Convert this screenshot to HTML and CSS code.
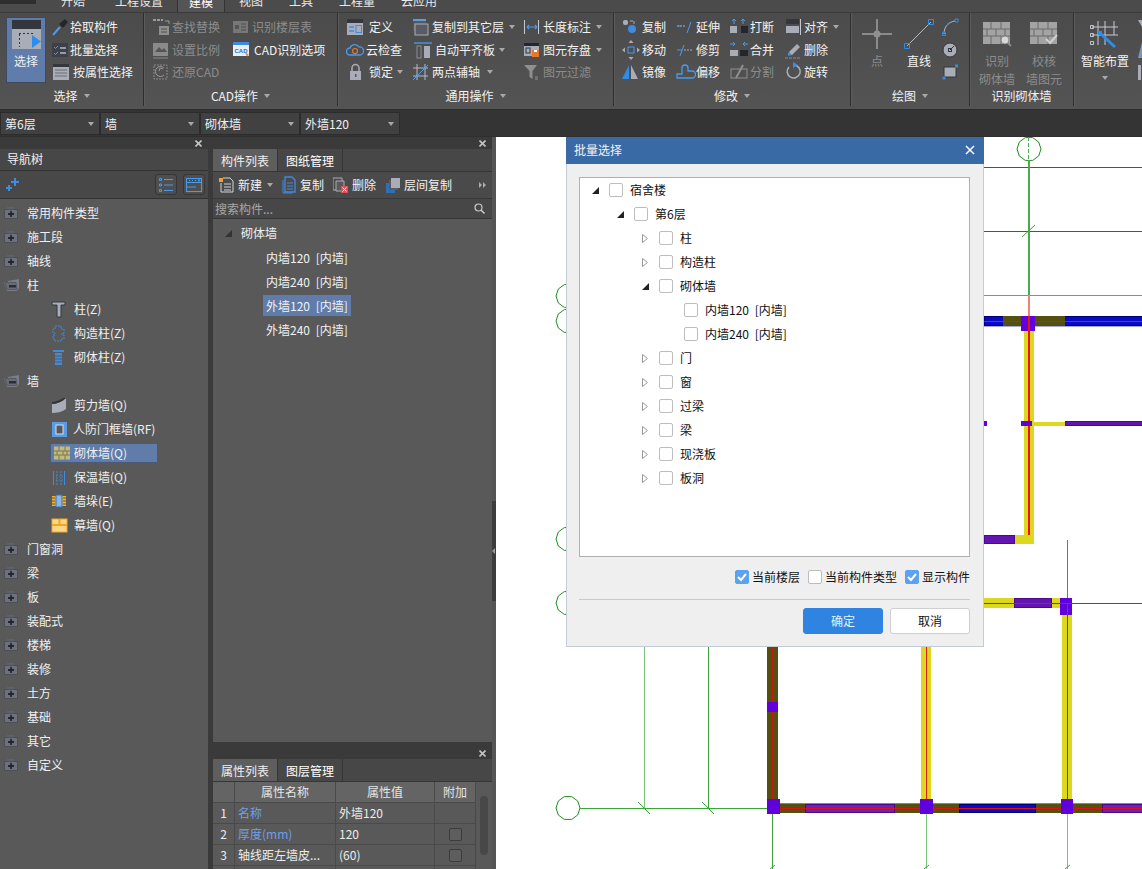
FILE: index.html
```html
<!DOCTYPE html>
<html lang="zh">
<head>
<meta charset="utf-8">
<title>批量选择</title>
<link rel="stylesheet" href="styles.css">
</head>
<body>
<svg class="sprite" aria-hidden="true">
  <symbol id="fold-closed" viewBox="0 0 14 12"><path d="M3 0h7l1 2H2z" fill="#5f626a"/><rect x=".5" y="2.500" width="13" height="9" fill="#6e7179" stroke="#4b4e56"/><path d="M7 4v6M4 7h6" stroke="#23262c" stroke-width="1.800"/></symbol>
  <symbol id="fold-open" viewBox="0 0 16 12"><path d="M4 2l11-2v9l-2 3H3L0 3h4z" fill="#7a7d85"/><path d="M1 3.500h11l1 7H3z" fill="#6a6d75" stroke="#4b4e56" stroke-width=".7"/><path d="M5 6h7v2.500H5z" fill="#2a2d33"/></symbol>
  <symbol id="tri-open" viewBox="0 0 7 7"><path d="M7 0v7H0z" fill="#222"/></symbol>
  <symbol id="tri-open-g" viewBox="0 0 7 7"><path d="M7 0v7H0z" fill="#333"/></symbol>
  <symbol id="tri-closed" viewBox="0 0 6 9"><path d="M.5.5l5 4-5 4z" fill="#fff" stroke="#999"/></symbol>
  <symbol id="tick" viewBox="0 0 14 14"><path d="M3 7l3 3 5-6" fill="none" stroke="#fff" stroke-width="2"/></symbol>
  <symbol id="close" viewBox="0 0 7 7"><path d="M.5.5l6 6M6.500.5l-6 6" stroke="#c4c4c4" stroke-width="1.600"/></symbol>
</svg>

<nav class="tabbar">
  <div class="titlepiece"></div>
  <span class="tab tab-first">开始</span>
  <span class="tab tab-second">工程设置</span>
  <span class="tab active">建模</span>
  <span class="tab">视图</span>
  <span class="tab">工具</span>
  <span class="tab">工程量</span>
  <span class="tab">云应用</span>
</nav>

<header class="ribbon">
  <section class="rgroup g-select">
    <div class="rbody">
      <div class="bigsel">
        <svg width="29" height="29" viewBox="0 0 29 29"><rect width="29" height="29" fill="#a9adb8"/><rect width="29" height="9" fill="#33363d"/><path d="M7 13.500h15M7.500 14v13" stroke="#33363d" stroke-dasharray="2 2" fill="none"/><path d="M20 15l9 6.500-9 6.500z" fill="#2d8de8"/></svg>
        <span>选择</span>
      </div>
      <div class="col c-sel">
        <div class="tool"><svg width="18" height="20" viewBox="0 0 18 20"><path d="M1 18L8 10" stroke="#4b9aec" stroke-width="2"/><path d="M7 7l6-5 3 3-5 6z" fill="#23262c"/></svg>拾取构件</div>
        <div class="tool"><svg width="18" height="20" viewBox="0 0 18 20"><rect x="0" y="3" width="16" height="14" fill="#3b404b"/><path d="M2 7l1.500 1.500L6 6M2 13l1.500 1.500L6 12" stroke="#4b9aec" fill="none"/><path d="M8 8h6M8 13h6" stroke="#b6bac2" stroke-width="1.500"/></svg>批量选择</div>
        <div class="tool"><svg width="21" height="20" viewBox="0 0 21 20"><rect x="1" y="2" width="16" height="16" fill="#a9adb8"/><rect x="1" y="2" width="16" height="3" fill="#33363d"/><path d="M3 8h12M3 11h12M3 14h12" stroke="#6a6d75"/></svg>按属性选择</div>
      </div>
    </div>
    <div class="rtitle">选择<i class="caret"></i></div>
  </section>

  <section class="rgroup g-cad">
    <div class="rbody">
      <div class="col c-cad">
        <div class="tool off"><svg width="20" height="20" viewBox="0 0 20 20"><path d="M1 3h10" stroke="#9a9a9a" stroke-width="2" stroke-dasharray="3 1"/><rect x="7" y="9" width="10" height="9" fill="#8f8f8f"/><path d="M9 12h6M9 15h6" stroke="#4f4f4f"/><path d="M13 4h4v3" stroke="#9a9a9a" fill="none"/></svg>查找替换</div>
        <div class="tool off"><svg width="20" height="20" viewBox="0 0 20 20"><rect x="1" y="3" width="15" height="13" fill="#8a8a8a"/><path d="M3 12l4-5 3 3 2-2 3 4z" fill="#555"/><path d="M1 18h15" stroke="#8a8a8a"/></svg>设置比例</div>
        <div class="tool off"><svg width="20" height="20" viewBox="0 0 20 20"><rect x="2" y="3" width="13" height="14" fill="none" stroke="#8a8a8a" stroke-dasharray="2 1"/><path d="M12 6a5 5 0 1 0 0 7M7 9l1-3 3 1" fill="none" stroke="#9a9a9a"/></svg>还原CAD</div>
      </div>
      <div class="col">
        <div class="tool off"><svg width="20" height="20" viewBox="0 0 20 20"><rect x="1" y="4" width="15" height="12" fill="#777"/><rect x="3" y="8" width="4" height="4" fill="#555"/><path d="M9 7h5M9 10h5M9 13h5" stroke="#4f4f4f"/></svg>识别楼层表</div>
        <div class="tool"><svg width="22" height="20" viewBox="0 0 22 20"><rect x="1" y="2" width="16" height="14" fill="#e8eef6"/><rect x="1" y="2" width="16" height="3" fill="#3f8be0"/><text x="2.500" y="13" class="cadtxt">CAD</text><path d="M13 12l4 3-2 1 1 3z" fill="#e8772e"/></svg>CAD识别选项</div>
      </div>
    </div>
    <div class="rtitle">CAD操作<i class="caret"></i></div>
  </section>

  <section class="rgroup g-common">
    <div class="rbody">
      <div class="col c-w66">
        <div class="tool"><svg width="23" height="20" viewBox="0 0 23 20"><rect x="1" y="2" width="16" height="16" fill="#a9adb8"/><rect x="1" y="2" width="16" height="4" fill="#33363d"/><path d="M3 10h5M3 14h5" stroke="#3f8be0" stroke-width="1.500"/><rect x="10" y="8.500" width="5.500" height="7" fill="none" stroke="#3f8be0"/></svg>定义</div>
        <div class="tool"><svg width="20" height="20" viewBox="0 0 20 20"><path d="M4 15a3.500 3.500 0 0 1 0-7 5 5 0 0 1 9-1 4 4 0 0 1 1 8z" fill="none" stroke="#4b9aec" stroke-width="1.300"/><circle cx="9" cy="11" r="2.500" fill="none" stroke="#e8772e" stroke-width="1.200"/></svg>云检查</div>
        <div class="tool"><svg width="23" height="20" viewBox="0 0 23 20"><path d="M6 9V6a3.500 3.500 0 0 1 7 0v3" fill="none" stroke="#a9adb8" stroke-width="1.500"/><rect x="4" y="9" width="11" height="9" fill="#a9adb8"/><rect x="9" y="12" width="1.500" height="3" fill="#55585f"/></svg>锁定<i class="caret near"></i></div>
      </div>
      <div class="col c-w112">
        <div class="tool"><svg width="20" height="20" viewBox="0 0 20 20"><rect x="1" y="2" width="13" height="12" fill="#5b9be6"/><rect x="1" y="4" width="13" height="10" fill="#595959"/><rect x="3" y="7" width="13" height="11" fill="#595c63" stroke="#a9adb8"/></svg>复制到其它层<i class="caret"></i></div>
        <div class="tool"><svg width="23" height="20" viewBox="0 0 23 20"><path d="M2 3h18" stroke="#4c7fb8" stroke-width="2"/><rect x="5" y="6" width="4" height="12" fill="none" stroke="#8a8d94"/><rect x="12" y="6" width="6" height="12" fill="#a9adb8"/></svg>自动平齐板<i class="caret near"></i></div>
        <div class="tool"><svg width="20" height="20" viewBox="0 0 20 20"><path d="M5 2v16M13 2v16M1 6h15M1 14h15" stroke="#b6bac2"/><path d="M1 18L16 3" stroke="#4b9aec"/></svg>两点辅轴<i class="caret wide"></i></div>
      </div>
      <div class="col">
        <div class="tool"><svg width="19" height="20" viewBox="0 0 19 20"><path d="M.5 3v14M14.500 3v14" stroke="#c6c9cf"/><path d="M3 10h10M3 10l2-2M3 10l2 2M13 10l-2-2M13 10l-2 2" stroke="#4b9aec" fill="none" stroke-width="1.200"/></svg>长度标注<i class="caret"></i></div>
        <div class="tool"><svg width="19" height="20" viewBox="0 0 19 20"><rect x="0" y="3" width="15" height="13" fill="#a9adb8"/><rect y="3" width="15" height="3" fill="#23262c"/><rect x="2" y="8" width="4" height="5" fill="none" stroke="#33363d"/><rect x="8" y="10" width="7" height="7" fill="#e8772e"/><rect x="10" y="10" width="3" height="2" fill="#fff"/></svg>图元存盘<i class="caret"></i></div>
        <div class="tool off"><svg width="19" height="20" viewBox="0 0 19 20"><path d="M0 3h13L8.500 9v8l-3-2V9z" fill="#8f8f8f"/><path d="M11 15h3M11 17h3" stroke="#8f8f8f"/></svg>图元过滤</div>
      </div>
    </div>
    <div class="rtitle">通用操作<i class="caret"></i></div>
  </section>

  <section class="rgroup g-modify">
    <div class="rbody">
      <div class="col c-w54">
        <div class="tool"><svg width="20" height="20" viewBox="0 0 20 20"><rect x="1" y="3" width="5" height="5" rx="2" fill="#a9adb8"/><circle cx="10" cy="12" r="4" fill="#3f8be0"/><path d="M8 4h3M12 4v3" stroke="#a9adb8"/></svg>复制</div>
        <div class="tool"><svg width="20" height="20" viewBox="0 0 20 20"><rect x="6" y="7" width="6" height="6" fill="none" stroke="#4b9aec"/><path d="M9 0l2.500 3h-5zM9 20l2.500-3h-5zM0 10l3-2.500v5zM18 10l-3-2.500v5z" fill="#a9adb8"/></svg>移动</div>
        <div class="tool"><svg width="20" height="20" viewBox="0 0 20 20"><path d="M7 3v14H0z" fill="#2d8de8"/><path d="M9 3v14h7z" fill="#a9adb8"/></svg>镜像</div>
      </div>
      <div class="col c-w54">
        <div class="tool"><svg width="20" height="20" viewBox="0 0 20 20"><path d="M1 9h9" stroke="#a9adb8" stroke-dasharray="2 1"/><path d="M1 9h4M11 16L15 5" stroke="#4b9aec"/></svg>延伸</div>
        <div class="tool"><svg width="20" height="20" viewBox="0 0 20 20"><path d="M8 10h8" stroke="#a9adb8" stroke-dasharray="2 1"/><path d="M1 10h5M4 16L8 5" stroke="#4b9aec"/></svg>修剪</div>
        <div class="tool"><svg width="20" height="20" viewBox="0 0 20 20"><path d="M1 16v-4h5V6a3 3 0 0 1 6 0v3h4a2 2 0 0 1 0 7z" fill="none" stroke="#4b9aec" stroke-width="1.300"/></svg>偏移</div>
      </div>
      <div class="col c-w55">
        <div class="tool"><svg width="20" height="20" viewBox="0 0 20 20"><path d="M4 2v5M2 4l2-2 2 2" stroke="#4b9aec" fill="none"/><rect y="9" width="7" height="7" fill="#a9adb8"/><rect x="11" y="9" width="7" height="7" fill="#23262c"/><path d="M13 2v5M11 4l2-2 2 2" stroke="#4b9aec" fill="none"/></svg>打断</div>
        <div class="tool"><svg width="20" height="20" viewBox="0 0 20 20"><path d="M0 4h5M3 2l2 2-2 2M18 4h-5M15 2l-2 2 2 2" stroke="#4b9aec" fill="none"/><rect y="10" width="8" height="6" fill="#a9adb8"/><rect x="10" y="10" width="8" height="6" fill="#23262c"/></svg>合并</div>
        <div class="tool off"><svg width="20" height="20" viewBox="0 0 20 20"><rect x="1" y="7" width="16" height="9" fill="none" stroke="#8f8f8f"/><path d="M6 16L13 3" stroke="#8f8f8f" stroke-width="2"/></svg>分割</div>
      </div>
      <div class="col">
        <div class="tool"><svg width="19" height="20" viewBox="0 0 19 20"><rect x="1" y="2" width="13" height="5" fill="#33363d"/><rect x="1" y="9" width="13" height="7" fill="#a9adb8"/><path d="M15.500 2v16" stroke="#c6c9cf"/></svg>对齐<i class="caret"></i></div>
        <div class="tool"><svg width="19" height="20" viewBox="0 0 19 20"><path d="M4 12l8-8 3 3-8 8H3z" fill="#a9adb8"/><path d="M4 12l3 3-4 1z" fill="#3f8be0"/><path d="M0 18h15" stroke="#8a8d94" stroke-dasharray="3 1"/></svg>删除</div>
        <div class="tool"><svg width="19" height="20" viewBox="0 0 19 20"><path d="M4 5a6.500 6.500 0 1 0 5-2" fill="none" stroke="#a9adb8" stroke-width="1.600"/><path d="M8 0l5 3-5 3z" fill="#3f8be0"/></svg>旋转</div>
      </div>
    </div>
    <div class="rtitle">修改<i class="caret"></i></div>
  </section>

  <section class="rgroup g-draw">
    <div class="rbody">
      <div class="big w42 off">
        <svg width="30" height="30" viewBox="0 0 30 30"><path d="M15 0v30M0 15h30" stroke="#c9c9c9"/><circle cx="15" cy="15" r="3.500" fill="#8f8f8f"/></svg>
        <span>点</span>
      </div>
      <div class="big w42">
        <svg width="30" height="30" viewBox="0 0 30 30"><path d="M3 27L27 3" stroke="#b6bac2"/><path d="M.5 24.500h5v5h-5zM24.500.5h5v5h-5z" fill="none" stroke="#2d8de8"/></svg>
        <span>直线</span>
      </div>
      <div class="col c-small">
        <div class="tool"><svg width="18" height="20" viewBox="0 0 18 20"><path d="M2 17C2 10 6 5 13 4" fill="none" stroke="#b6bac2"/><path d="M.5 15.500h3v3h-3zM13 2h3v3h-3z" fill="none" stroke="#2d8de8"/><circle cx="6" cy="7" r="1" fill="#2d8de8"/></svg></div>
        <div class="tool"><svg width="18" height="20" viewBox="0 0 18 20"><circle cx="8" cy="10" r="7" fill="#a9adb8" stroke="#33363d"/><path d="M8 10l4-4" stroke="#33363d"/><rect x="6.500" y="8.500" width="3" height="3" fill="none" stroke="#33363d"/></svg></div>
        <div class="tool"><svg width="18" height="20" viewBox="0 0 18 20"><rect x="2" y="5" width="12" height="10" fill="#a9adb8" stroke="#33363d"/><path d="M.5 14.500h3v3h-3zM13 2.500h3v3h-3z" fill="#2d8de8"/></svg></div>
      </div>
    </div>
    <div class="rtitle">绘图<i class="caret"></i></div>
  </section>

  <section class="rgroup g-recog">
    <div class="rbody">
      <div class="big w46 off">
        <svg width="30" height="30" viewBox="0 0 30 30"><rect x="1" y="3" width="27" height="22" fill="#a3a3a3"/><path d="M1 10h27M1 17h27M9 3v7M19 3v7M5 10v7M14 10v7M23 10v7M9 17v8M19 17v8" stroke="#6b6b6b"/><circle cx="23" cy="21" r="4" fill="#d8d8d8" stroke="#8a8a8a"/><path d="M26 24l3 3" stroke="#8a8a8a" stroke-width="2"/></svg>
        <span>识别<br>砌体墙</span>
      </div>
      <div class="big w46 off m1">
        <svg width="30" height="30" viewBox="0 0 30 30"><rect x="1" y="3" width="27" height="22" fill="#a3a3a3"/><path d="M1 10h27M1 17h27M9 3v7M19 3v7M5 10v7M14 10v7M23 10v7M9 17v8M19 17v8" stroke="#6b6b6b"/><path d="M17 20l4 4 7-8" fill="none" stroke="#cfcfcf" stroke-width="2"/></svg>
        <span>校核<br>墙图元</span>
      </div>
    </div>
    <div class="rtitle">识别砌体墙</div>
  </section>

  <section class="rgroup g-smart">
    <div class="rbody">
      <div class="big w50">
        <svg width="30" height="30" viewBox="0 0 30 30"><path d="M8 2v24M15 2v24M24 2v14M2 8h26M2 16h26" stroke="#c6c9cf"/><path d="M10 14l15 14" stroke="#2d8de8" stroke-width="3"/><rect x="8" y="12" width="4" height="4" fill="#2d8de8"/><path d="M.5 6.500h3v3h-3zM.5 14.500h3v3h-3zM.5 22.500h3v3h-3z" fill="none" stroke="#c6c9cf"/></svg>
        <span>智能布置</span>
        <i class="caret under"></i>
      </div>
      <div class="col c-edge">
        <div class="tool"><svg width="10" height="20" viewBox="0 0 10 20"><path d="M0 3h10v7H4z" fill="#a9adb8"/></svg></div>
        <div class="tool"><svg width="10" height="20" viewBox="0 0 10 20"><path d="M4 2h6v16H0z" fill="#7f95b8"/></svg></div>
        <div class="tool"><svg width="10" height="20" viewBox="0 0 10 20"><path d="M0 3h3v15H0zM5 3h5v15H5z" fill="#a9adb8"/></svg></div>
      </div>
    </div>
  </section>
</header>

<div class="selbar">
  <div class="sel">第6层<i class="caret"></i></div>
  <div class="sel">墙<i class="caret"></i></div>
  <div class="sel">砌体墙<i class="caret"></i></div>
  <div class="sel">外墙120<i class="caret"></i></div>
</div>

<main class="main">
  <aside class="leftpane">
    <div class="strip"><svg class="x" width="7" height="7"><use href="#close"/></svg></div>
    <div class="navtitle">导航树</div>
    <div class="navtools">
      <svg width="14" height="14" viewBox="0 0 14 14"><path d="M8 0h2v3h3v2h-3v3H8V5H5V3h3zM2 7h2v2h2v2H4v2H2v-2H0V9h2z" fill="#3f8be0"/></svg>
      <div class="navbtns">
        <div class="navbtn"><svg width="14" height="14" viewBox="0 0 14 14"><path d="M.5.500h2v2h-2zM.5 6h2v2h-2zM.5 11.500h2v2h-2z" fill="none" stroke="#4b9aec"/><path d="M5 1.500h9M5 7h9M5 12.500h9" stroke="#4b9aec"/></svg></div>
        <div class="navbtn"><svg width="16" height="14" viewBox="0 0 16 14"><rect x=".5" y=".5" width="15" height="13" fill="none" stroke="#4b9aec"/><path d="M1 4.500h14M1 9h9M3 2.500h1M6 2.500h1M9 2.500h1M12 2h2l-1 1.500z" stroke="#4b9aec"/></svg></div>
      </div>
    </div>
    <ul class="navtree">
      <li class="nrow"><svg class="fi" width="14" height="12"><use href="#fold-closed"/></svg>常用构件类型</li>
      <li class="nrow"><svg class="fi" width="14" height="12"><use href="#fold-closed"/></svg>施工段</li>
      <li class="nrow"><svg class="fi" width="14" height="12"><use href="#fold-closed"/></svg>轴线</li>
      <li class="nrow"><svg class="fi" width="16" height="12"><use href="#fold-open"/></svg>柱</li>
      <li class="nrow child"><svg width="24" height="20" viewBox="0 0 24 20"><path d="M2 3h13v3h-4v12H7V6H2z" fill="#a9adb8" stroke="#33363d"/></svg>柱(Z)</li>
      <li class="nrow child"><svg width="24" height="20" viewBox="0 0 24 20"><path d="M5 3h6v3h3v4h-2v2h2v4h-3v2H5v-2H3v-4h2v-2H3V6h2z" fill="none" stroke="#3f8be0" stroke-dasharray="2 1"/></svg>构造柱(Z)</li>
      <li class="nrow child"><svg width="24" height="20" viewBox="0 0 24 20"><path d="M3 3h11v2H3zM5 6h7v12H5z" fill="#3f8be0"/><path d="M5 9h7M5 12h7M5 15h7" stroke="#595959"/></svg>砌体柱(Z)</li>
      <li class="nrow"><svg class="fi" width="16" height="12"><use href="#fold-open"/></svg>墙</li>
      <li class="nrow child"><svg width="24" height="20" viewBox="0 0 24 20"><path d="M2 9c4 0 10-2 14-6v11c-4 3-10 4-14 4z" fill="#a9adb8"/><path d="M2 9c4 0 10-2 14-6l-3 0C10 5 5 7 2 7z" fill="#33363d"/></svg>剪力墙(Q)</li>
      <li class="nrow child"><svg width="23" height="20" viewBox="0 0 23 20"><rect x="2" y="3" width="15" height="15" fill="#5b9be6"/><rect x="6" y="6" width="7" height="9" fill="#595959" stroke="#cfe0f6"/></svg>人防门框墙(RF)</li>
      <li class="nrow child"><span class="picked"><svg width="18" height="16" viewBox="0 0 18 16"><rect x="2" y="1.500" width="16" height="13" fill="#c2bb80"/><path d="M2 6h16M2 10h16M7 1.500V6M13 1.500V6M5 6v4M11 6v4M15 6v4M7 10v4.500M13 10v4.500" stroke="#7a7650"/></svg>砌体墙(Q)</span></li>
      <li class="nrow child"><svg width="24" height="20" viewBox="0 0 24 20"><path d="M3.500 4v14M14.500 4v14" stroke="#3f8be0"/><path d="M7 4v14M11 4v14" stroke="#3f8be0" stroke-dasharray="2 1"/><path d="M3 9h12M3 13h12" stroke="#3f8be0" stroke-dasharray="1 2"/></svg>保温墙(Q)</li>
      <li class="nrow child"><svg width="24" height="20" viewBox="0 0 24 20"><rect x="2" y="5" width="14" height="10" fill="#f0b429"/><path d="M2 7h3M2 10h3M2 13h3M13 7h3M13 10h3M13 13h3" stroke="#595959"/><rect x="6" y="4" width="6" height="12" fill="#8ab7ea" stroke="#3f6fb0"/></svg>墙垛(E)</li>
      <li class="nrow child"><svg width="24" height="20" viewBox="0 0 24 20"><rect x="2" y="4" width="15" height="13" fill="#fdd68a" stroke="#f0a820"/><path d="M2 10h15M9.500 4v6" stroke="#f0a820" stroke-width="2"/></svg>幕墙(Q)</li>
      <li class="nrow"><svg class="fi" width="14" height="12"><use href="#fold-closed"/></svg>门窗洞</li>
      <li class="nrow"><svg class="fi" width="14" height="12"><use href="#fold-closed"/></svg>梁</li>
      <li class="nrow"><svg class="fi" width="14" height="12"><use href="#fold-closed"/></svg>板</li>
      <li class="nrow"><svg class="fi" width="14" height="12"><use href="#fold-closed"/></svg>装配式</li>
      <li class="nrow"><svg class="fi" width="14" height="12"><use href="#fold-closed"/></svg>楼梯</li>
      <li class="nrow"><svg class="fi" width="14" height="12"><use href="#fold-closed"/></svg>装修</li>
      <li class="nrow"><svg class="fi" width="14" height="12"><use href="#fold-closed"/></svg>土方</li>
      <li class="nrow"><svg class="fi" width="14" height="12"><use href="#fold-closed"/></svg>基础</li>
      <li class="nrow"><svg class="fi" width="14" height="12"><use href="#fold-closed"/></svg>其它</li>
      <li class="nrow"><svg class="fi" width="14" height="12"><use href="#fold-closed"/></svg>自定义</li>
    </ul>
  </aside>

  <div class="midcol">
    <section class="panel listpanel">
      <div class="strip"><svg class="x" width="7" height="7"><use href="#close"/></svg></div>
      <div class="ptabs">
        <span class="ptab on">构件列表</span>
        <span class="ptab">图纸管理</span>
      </div>
      <div class="ltools">
        <span class="lt t-new"><svg width="19" height="20" viewBox="0 0 19 20"><rect x="0" y="3" width="4" height="4" fill="#f0a040"/><path d="M4 3h7l3 3v11H2V8" fill="none" stroke="#d0d3d8"/><path d="M5 9h7M5 12h7M5 15h7" stroke="#d0d3d8"/></svg>新建<i class="caret"></i></span>
        <span class="lt t-copy"><svg width="18" height="20" viewBox="0 0 18 20"><path d="M1 5v13h9" fill="none" stroke="#3f8be0"/><path d="M3 2h7l3 3v12H3z" fill="none" stroke="#3f8be0" stroke-width="1.300"/><path d="M5 8h6M5 11h6M5 14h6" stroke="#3f8be0"/></svg>复制</span>
        <span class="lt t-del"><svg width="19" height="20" viewBox="0 0 19 20"><path d="M0 3h9v12H0z" fill="none" stroke="#a9adb8"/><path d="M3 6h8v10H3z" fill="#595959" stroke="#a9adb8"/><rect x="8" y="11" width="7" height="7" fill="#d9505a"/><path d="M9.500 12.500l4 4M13.500 12.500l-4 4" stroke="#fff"/></svg>删除</span>
        <span class="lt t-floor"><svg width="18" height="20" viewBox="0 0 18 20"><path d="M0 8h9v10H0z" fill="#2f6fb8"/><rect x="3" y="5" width="9" height="10" fill="#595c63"/><rect x="5" y="3" width="9" height="10" fill="#a9adb8"/></svg>层间复制</span>
        <svg class="more" width="8" height="8" viewBox="0 0 8 8"><path d="M0 1l3 3-3 3zM4 1l3 3-3 3z" fill="#aaa"/></svg>
      </div>
      <div class="search">搜索构件...<svg width="11" height="11" viewBox="0 0 11 11"><circle cx="4.500" cy="4.500" r="3.500" fill="none" stroke="#c9c9c9" stroke-width="1.200"/><path d="M7 7l3.500 3.500" stroke="#c9c9c9" stroke-width="1.500"/></svg></div>
      <ul class="ltree">
        <li class="lrow root"><svg width="7" height="7"><use href="#tri-open-g"/></svg>砌体墙</li>
        <li class="lrow item"><span>内墙120 [内墙]</span></li>
        <li class="lrow item"><span>内墙240 [内墙]</span></li>
        <li class="lrow item"><span class="picked-text">外墙120 [内墙]</span></li>
        <li class="lrow item"><span>外墙240 [内墙]</span></li>
      </ul>
    </section>

    <section class="panel proppanel">
      <div class="strip"><svg class="x" width="7" height="7"><use href="#close"/></svg></div>
      <div class="ptabs">
        <span class="ptab on">属性列表</span>
        <span class="ptab">图层管理</span>
      </div>
      <div class="propbody">
        <div class="ptable">
          <div class="cell head"></div><div class="cell head ctr">属性名称</div><div class="cell head ctr">属性值</div><div class="cell head ctr">附加</div>
          <div class="cell ctr num">1</div><div class="cell link">名称</div><div class="cell">外墙120</div><div class="cell"></div>
          <div class="cell ctr num">2</div><div class="cell link">厚度(mm)</div><div class="cell">120</div><div class="cell ctr"><span class="pchk"></span></div>
          <div class="cell ctr num">3</div><div class="cell">轴线距左墙皮...</div><div class="cell">(60)</div><div class="cell ctr"><span class="pchk"></span></div>
          <div class="cell ctr num"></div><div class="cell"></div><div class="cell"></div><div class="cell"></div>
        </div>
        <div class="vscroll"><div class="thumb"></div></div>
      </div>
    </section>
  </div>

  <div class="splitter"><div class="handle"><i></i></div></div>

  <div class="canvas">
    <svg class="drawing" width="646" height="732" viewBox="496 137 646 732">
      <defs>
        <polygon id="axis" points="12,0 9.700,7 3.700,11.400 -3.700,11.400 -9.700,7 -12,0 -9.700,-7 -3.700,-11.400 3.700,-11.400 9.700,-7" fill="none" stroke="#1f8f1f"/>
      </defs>
      <rect x="496" y="137" width="646" height="732" fill="#fff"/>
      <use href="#axis" x="568" y="296"/><use href="#axis" x="568" y="321"/><use href="#axis" x="568" y="539"/><use href="#axis" x="568" y="603"/>
      <use href="#axis" x="568" y="808"/><use href="#axis" x="1029" y="149"/>
      <g shape-rendering="crispEdges">
        <path d="M984 167.500h158M984 231.500h158" stroke="#1a7a1a"/>
        <path d="M1028.500 160v135.500" stroke="#4cab4c" stroke-width="2"/>
        <path d="M1028.500 137v23" stroke="#4cab4c" stroke-dasharray="4 2"/>
        <path d="M984 295.500h158" stroke="#f06060"/>
        <path d="M1028.500 295v21" stroke="#f08080" stroke-width="2"/>
        <path d="M580 808.500h187" stroke="#3ba53b"/>
        <path d="M644.500 647v161" stroke="#7cc47c"/>
        <path d="M708.500 647v161" stroke="#3ba53b"/>
        <path d="M772.500 814v55" stroke="#3ba53b"/>
        <path d="M926.500 814v55M1067.500 814v55" stroke="#7cc47c"/>

        <rect x="984.500" y="316.500" width="158" height="9" fill="#0a0ac4" stroke="#00007c"/>
        <path d="M984 326.500h158" stroke="#a8a8dc"/>
        <rect x="1003" y="316" width="62" height="10" fill="#54500f"/>
        <path d="M984 321.500h158" stroke="#d81818"/>
        <rect x="1024" y="331" width="10" height="213" fill="#dcd820"/>
        <rect x="1021" y="316" width="14" height="15" fill="#6000dc"/>
        <path d="M1028.500 316v228" stroke="#f01010" stroke-width="2"/>
        <rect x="1034" y="422" width="31" height="4" fill="#dcd820"/>
        <rect x="1065.500" y="421.500" width="77" height="4" fill="#6414b0" stroke="#4a0a8c"/>
        <rect x="1021" y="421" width="11" height="5" fill="#6000dc"/>
        <rect x="984" y="421" width="3" height="5" fill="#6000dc"/>
        <rect x="984.500" y="535.500" width="30" height="8" fill="#6414b0" stroke="#4a0a8c"/>
        <rect x="1015" y="535" width="15" height="9" fill="#dcd820"/>

        <path d="M1067.500 540v63" stroke="#f04040"/>
        <path d="M984 598h30v10h-30zM1052 598h8v10h-8z" fill="#dcd820"/>
        <rect x="1014.500" y="598.500" width="37" height="9" fill="#6414b0" stroke="#4a0a8c"/>
        <rect x="1062" y="615" width="10" height="188" fill="#dcd820"/>
        <rect x="1060" y="598" width="12" height="17" fill="#6000dc"/>
        <path d="M984 603.500h158" stroke="#d81818"/>
        <path d="M1067.500 603v197" stroke="#f01010"/>

        <rect x="767" y="647" width="11" height="155" fill="#54500f"/>
        <path d="M772.500 647v155" stroke="#c81810" stroke-width="2"/>
        <rect x="767" y="702" width="11" height="10" fill="#6000dc"/>
        <rect x="921" y="647" width="10" height="155" fill="#dcd820"/>
        <path d="M926.500 647v155" stroke="#e02010"/>

        <rect x="778" y="803" width="364" height="10" fill="#54500f"/>
        <path d="M778 803.500h364" stroke="#8f8c5c"/>
        <rect x="805.500" y="804.500" width="89" height="8" fill="#6f20b8" stroke="#4a0a8c"/>
        <rect x="959.500" y="804.500" width="76" height="8" fill="#0a0ac4" stroke="#00007c"/>
        <rect x="1102.500" y="804.500" width="40" height="8" fill="#6f20b8" stroke="#4a0a8c"/>
        <path d="M778 808.500h364" stroke="#e01010"/>
        <rect x="767" y="799" width="13" height="15" fill="#6000dc"/>
        <rect x="920" y="799" width="13" height="15" fill="#6000dc"/>
        <rect x="1061" y="799" width="12" height="15" fill="#6000dc"/>
      </g>
      <path d="M1022 237l13-12M638 802l12 12M702 802l12 12M770 869l5-4M924 869l5-4M1065 869l5-4" stroke="#3ba53b"/>
    </svg>

    <div class="dialog">
      <div class="dtitle">批量选择<svg width="10" height="10" viewBox="0 0 10 10"><path d="M1 1l8 8M9 1l-8 8" stroke="#fff" stroke-width="1.500"/></svg></div>
      <div class="dbody">
        <ul class="dtree">
          <li class="drow l1"><svg class="da" width="7" height="7"><use href="#tri-open"/></svg><span class="chk"></span>宿舍楼</li>
          <li class="drow l2"><svg class="da" width="7" height="7"><use href="#tri-open"/></svg><span class="chk"></span>第6层</li>
          <li class="drow l3"><svg class="da" width="6" height="9"><use href="#tri-closed"/></svg><span class="chk"></span>柱</li>
          <li class="drow l3"><svg class="da" width="6" height="9"><use href="#tri-closed"/></svg><span class="chk"></span>构造柱</li>
          <li class="drow l3"><svg class="da" width="7" height="7"><use href="#tri-open"/></svg><span class="chk"></span>砌体墙</li>
          <li class="drow l4"><span class="chk"></span>内墙120 [内墙]</li>
          <li class="drow l4"><span class="chk"></span>内墙240 [内墙]</li>
          <li class="drow l3"><svg class="da" width="6" height="9"><use href="#tri-closed"/></svg><span class="chk"></span>门</li>
          <li class="drow l3"><svg class="da" width="6" height="9"><use href="#tri-closed"/></svg><span class="chk"></span>窗</li>
          <li class="drow l3"><svg class="da" width="6" height="9"><use href="#tri-closed"/></svg><span class="chk"></span>过梁</li>
          <li class="drow l3"><svg class="da" width="6" height="9"><use href="#tri-closed"/></svg><span class="chk"></span>梁</li>
          <li class="drow l3"><svg class="da" width="6" height="9"><use href="#tri-closed"/></svg><span class="chk"></span>现浇板</li>
          <li class="drow l3"><svg class="da" width="6" height="9"><use href="#tri-closed"/></svg><span class="chk"></span>板洞</li>
        </ul>
        <div class="dopts">
          <label class="opt"><span class="chk on"><svg width="14" height="14"><use href="#tick"/></svg></span>当前楼层</label>
          <label class="opt"><span class="chk"></span>当前构件类型</label>
          <label class="opt"><span class="chk on"><svg width="14" height="14"><use href="#tick"/></svg></span>显示构件</label>
        </div>
        <div class="ddiv"></div>
        <div class="dbtns">
          <button class="btn primary">确定</button>
          <button class="btn">取消</button>
        </div>
      </div>
    </div>
  </div>
</main>
</body>
</html>
```
FILE: styles.css
```css
* { box-sizing: border-box; }
html, body { margin: 0; padding: 0; }
body {
  width: 1142px;
  height: 869px;
  overflow: hidden;
  background: #333;
  color: #f2f2f2;
  font: 12px/20px "Noto Sans CJK SC", "Liberation Sans", sans-serif;
}
ul { list-style: none; margin: 0; padding: 0; }
i { font-style: normal; }
svg { display: block; flex: none; }
.sprite { display: none; }

/* top tabs */
.tabbar {
  display: flex;
  height: 12px;
  overflow: hidden;
  background: #4b4b4b;
  position: relative;
}
.titlepiece { width: 36px; height: 4px; background: #2e2e2e; flex: none; margin-right: 12px; }
.tab {
  flex: none;
  padding: 0 13px;
  height: 12px;
  line-height: 2px;
  color: #e8e8e8;
}
.tab-first { padding-right: 17px; margin-left: 0; }
.tab.active {
  background: #555;
  border-left: 1px solid #333;
  border-right: 1px solid #333;
  padding: 0 11px;
  margin: 0 1px;
  line-height: 3px;
  color: #fff;
}

/* ribbon */
.ribbon {
  display: flex;
  height: 98px;
  overflow: hidden;
  border-top: 1px solid #3a3a3a;
  border-bottom: 1px solid #2e2e2e;
  background: linear-gradient(#4b4b4b, #545454);
}
.rgroup {
  flex: none;
  height: 93px;
  border-right: 1px solid #2e2e2e;
  box-shadow: 1px 0 0 #5c5c5c;
}
.rbody { display: flex; height: 73px; padding-top: 3px; }
.rtitle {
  display: flex;
  align-items: center;
  justify-content: center;
  height: 20px;
  color: #f2f2f2;
}
.rtitle .caret { margin-left: 6px; }
.caret {
  display: inline-block;
  flex: none;
  width: 0;
  height: 0;
  border-left: 3.5px solid transparent;
  border-right: 3.5px solid transparent;
  border-top: 4px solid #a8a8a8;
  margin-left: 5px;
}
.caret.near { margin-left: 4px; }
.caret.wide { margin-left: 7px; }
.caret.under { margin: 6px 0 0; }

.g-select { width: 144px; }
.g-select .rbody { padding-left: 6px; }
.g-cad { width: 194px; }
.g-cad .rbody { padding-left: 8px; }
.g-common { width: 276px; }
.g-common .rbody { padding-left: 8px; }
.g-modify { width: 237px; }
.g-modify .rbody { padding-left: 8px; }
.g-draw { width: 119px; }
.g-draw .rbody { padding-left: 5px; }
.g-recog { width: 104px; }
.g-recog .rbody { padding-left: 4px; }
.g-smart { flex: 1; border-right: 0; box-shadow: none; }
.g-smart .rbody { padding-left: 6px; }

.col {
  display: grid;
  grid-template-rows: 22px 23px 22px;
  flex: none;
}
.c-sel { margin-left: 6px; }
.c-cad { width: 80px; }
.c-w66 { width: 66px; }
.c-w112 { width: 112px; }
.c-w54 { width: 54px; }
.c-w55 { width: 55px; }
.c-small { margin-left: 2px; }
.c-edge { margin-left: 8px; }
.tool {
  display: flex;
  align-items: center;
  white-space: nowrap;
  color: #f2f2f2;
}
.tool.off, .big.off { color: #8c8c8c; }
.cadtxt { font: bold 6px "Liberation Sans", sans-serif; fill: #2f6fb8; }

.bigsel {
  display: flex;
  flex-direction: column;
  align-items: center;
  flex: none;
  width: 40px;
  height: 66px;
  margin-top: 1px;
  padding-top: 2px;
  background: #5f7caa;
  border: 1px solid #3d4a60;
}
.bigsel span { margin-top: 2px; line-height: 20px; }

.big {
  display: flex;
  flex-direction: column;
  align-items: center;
  flex: none;
  padding-top: 3px;
  text-align: center;
  color: #f2f2f2;
}
.big span { display: block; margin-top: 3px; line-height: 18px; white-space: nowrap; }
.w42 { width: 42px; }
.w46 { width: 46px; }
.w50 { width: 50px; }
.m1 { margin-left: 1px; }

/* selectors */
.selbar {
  display: flex;
  height: 26px;
  padding-top: 2px;
  background: #343434;
}
.sel {
  display: flex;
  align-items: center;
  justify-content: space-between;
  width: 100px;
  height: 23px;
  padding: 0 5px 0 4px;
  background: #414141;
  border: 1px solid #2c2c2c;
  color: #f0f0f0;
}
.sel .caret { border-top-color: #a8a8a8; }

/* main */
.main {
  display: flex;
  height: 733px;
  border-top: 1px solid #2e2e2e;
  background: #3a3a3a;
}
.strip {
  display: flex;
  justify-content: flex-end;
  align-items: center;
  height: 12px;
  padding-right: 6px;
  background: #3a3a3a;
}
.leftpane {
  flex: none;
  width: 208px;
  background: #595959;
  margin-right: 5px;
}
.navtitle {
  height: 22px;
  padding-left: 7px;
  line-height: 20px;
  background: #474747;
  border-bottom: 1px solid #333;
}
.navtools {
  display: flex;
  align-items: center;
  justify-content: space-between;
  height: 28px;
  padding: 0 3px 0 6px;
  background: #484848;
  border-bottom: 1px solid #333;
}
.navbtns { display: flex; gap: 6px; }
.navbtn {
  display: flex;
  align-items: center;
  justify-content: center;
  width: 22px;
  height: 21px;
  background: #4f4f4f;
  border: 1px solid #363636;
  border-radius: 3px;
}
.navtree { padding-top: 2px; }
.nrow {
  display: flex;
  align-items: center;
  height: 24px;
  padding-left: 4px;
  white-space: nowrap;
  color: #f0f0f0;
}
.nrow .fi { margin-right: 9px; }
.nrow .fi[width="16"] { margin-right: 7px; }
.nrow.child { padding-left: 50px; }
.picked {
  display: flex;
  align-items: center;
  width: 108px;
  height: 20px;
  margin-left: 0;
  background: #5f7caa;
  box-shadow: inset 0 0 0 1px #4a5a78;
  gap: 4px;
  padding-left: 2px;
}

/* middle */
.midcol {
  display: flex;
  flex-direction: column;
  flex: none;
  width: 279px;
  gap: 5px;
}
.panel { background: #595959; }
.listpanel { flex: 1; }
.proppanel { height: 122px; overflow: hidden; }
.ptabs {
  display: flex;
  height: 23px;
  background: #474747;
  border-bottom: 1px solid #363636;
}
.ptab {
  width: 65px;
  text-align: center;
  line-height: 24px;
  border-right: 1px solid #363636;
  color: #fff;
}
.ptab.on { background: #5e5e5e; color: #f0f0f0; }
.ltools {
  display: flex;
  align-items: center;
  height: 27px;
  padding-left: 6px;
  background: #4a4a4a;
  border-bottom: 1px solid #383838;
  position: relative;
}
.lt { display: flex; align-items: center; flex: none; }
.t-new { width: 63px; }
.t-copy { width: 51px; }
.t-del { width: 53px; }
.more { margin-left: 27px; }
.search {
  display: flex;
  align-items: center;
  justify-content: space-between;
  height: 20px;
  padding: 0 7px 0 2px;
  background: #474747;
  border-bottom: 1px solid #363636;
  color: #a8a8a8;
}
.ltree { padding-top: 2px; }
.lrow {
  display: flex;
  align-items: center;
  height: 24px;
  white-space: nowrap;
}
.lrow.root { padding-left: 12px; gap: 9px; color: #f0f0f0; }
.lrow.item { padding-left: 50px; word-spacing: 3px; }
.lrow.item span { display: block; height: 21px; line-height: 21px; padding: 0 3px; }
.picked-text { background: #5f7caa; }

.propbody { display: flex; }
.ptable {
  display: grid;
  grid-template-columns: 22px 101px 99px 41px;
  grid-auto-rows: 21px;
  flex: none;
}
.cell {
  padding-left: 3px;
  line-height: 20px;
  border-right: 1px solid #4a4a4a;
  border-bottom: 1px solid #4a4a4a;
  white-space: nowrap;
  overflow: hidden;
  color: #ececec;
}
.head { background: #646464; color: #e4e4e4; }
.ctr { display: flex; align-items: center; justify-content: center; padding-left: 0; }
.num { background: #5a5a5a; }
.link { color: #6f9fe8; }
.pchk {
  display: block;
  width: 13px;
  height: 13px;
  background: #5e5e5e;
  border: 1px solid #3c3c3c;
  border-radius: 2px;
}
.vscroll { flex: 1; padding: 14px 0 0 4px; }
.thumb { width: 8px; height: 59px; background: #484848; border-radius: 4px; }

/* splitter */
.splitter {
  display: flex;
  align-items: center;
  flex: none;
  width: 4px;
  background: #555;
}
.handle {
  display: flex;
  align-items: center;
  width: 4px;
  height: 100px;
  margin-top: 96px;
  background: #3c3c3c;
}
.handle i {
  width: 0;
  height: 0;
  border-top: 3px solid transparent;
  border-bottom: 3px solid transparent;
  border-right: 3px solid #9a9a9a;
}

/* canvas and dialog */
.canvas {
  flex: 1;
  position: relative;
  overflow: hidden;
  background: #fff;
}
.drawing { display: block; }
.dialog {
  position: absolute;
  left: 70px;
  top: 0;
  width: 418px;
  height: 510px;
  background: #efefef;
  border: 1px solid #c3cbd6;
  border-top: 0;
  color: #111;
}
.dtitle {
  display: flex;
  align-items: center;
  justify-content: space-between;
  height: 27px;
  margin: 0 -1px;
  padding: 0 9px 1px 8px;
  background: #3a6aa5;
  color: #f4f4f4;
}
.dbody { padding: 13px 13px 0 12px; }
.dtree {
  height: 380px;
  background: #fff;
  border: 1px solid #b0b0b0;
}
.drow {
  display: flex;
  align-items: center;
  height: 24px;
  white-space: nowrap;
}
.da { position: relative; flex: none; margin-right: 10px; }
.da[width="6"] { margin-right: 11px; }
.l1 { padding-left: 12px; }
.l2 { padding-left: 37px; }
.l3 { padding-left: 62px; }
.l4 { padding-left: 104px; word-spacing: 3px; }
.chk {
  display: block;
  flex: none;
  width: 14px;
  height: 14px;
  margin-right: 7px;
  background: #fff;
  border: 1px solid #bdbdbd;
  border-radius: 2px;
}
.dopts {
  display: flex;
  justify-content: flex-end;
  gap: 8px;
  height: 20px;
  margin-top: 10px;
}
.opt { display: flex; align-items: center; }
.opt .chk { margin-right: 3px; }
.chk.on { background: #5ba2f2; border-color: #5ba2f2; }
.chk.on svg { margin: -1px; }
.ddiv { height: 1px; margin-top: 12px; background: #c8c8c8; }
.dbtns {
  display: flex;
  justify-content: flex-end;
  gap: 7px;
  margin-top: 8px;
}
.btn {
  width: 80px;
  height: 26px;
  padding: 0;
  background: #fff;
  border: 1px solid #cfcfcf;
  border-radius: 3px;
  color: #111;
  font: 12px/24px "Noto Sans CJK SC", "Liberation Sans", sans-serif;
}
.btn.primary {
  background: #2e84e0;
  border-color: #2e84e0;
  color: #e8f1fb;
}
```
